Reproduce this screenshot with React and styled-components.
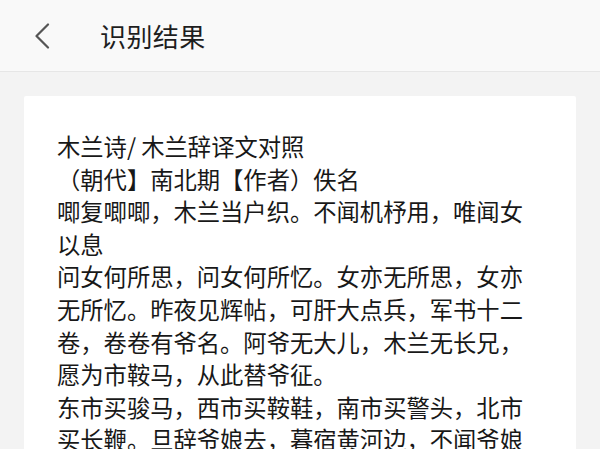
import React from "react";
import styled, { createGlobalStyle } from "styled-components";

const Global = createGlobalStyle`
  html, body { margin: 0; padding: 0; background: #f3f3f3; }
  body { font-family: "Noto Sans CJK SC", "Noto Sans", sans-serif; }
`;

const Page = styled.div`
  width: 600px;
  height: 449px;
  overflow: hidden;
  background: #f3f3f3;
  display: flex;
  flex-direction: column;
`;

const Header = styled.header`
  height: 71px;
  flex: none;
  display: flex;
  align-items: center;
  background: #f9f9f9;
  border-bottom: 1px solid #e6e6e6;
  padding-left: 32px;
  box-sizing: content-box;
`;

const BackButton = styled.button`
  border: 0;
  background: none;
  padding: 0;
  width: 20px;
  height: 28px;
  display: flex;
  align-items: center;
  justify-content: center;
  margin-top: 1px;
  cursor: pointer;
`;

const Title = styled.h1`
  margin: 0 0 0 48px;
  font-size: 26px;
  font-weight: 400;
  color: #1e1e1e;
  line-height: 1;
  letter-spacing: 0.4px;
`;

const Body = styled.main`
  flex: 1;
  padding: 24px 24px 0 24px;
  display: flex;
  flex-direction: column;
`;

const Card = styled.section`
  background: #fff;
  border-radius: 2px;
  padding: 34px 33px 20px 33px;
  flex: 1;
`;

const Line = styled.p`
  margin: 0;
  font-size: 23.3px;
  line-height: 32.6px;
  color: #181818;
  max-width: 480px;
`;

const lines = [
  "木兰诗/ 木兰辞译文对照",
  "（朝代】南北期【作者）佚名",
  "唧复唧唧，木兰当户织。不闻机杼用，唯闻女以息",
  "问女何所思，问女何所忆。女亦无所思，女亦无所忆。昨夜见辉帖，可肝大点兵，军书十二卷，卷卷有爷名。阿爷无大儿，木兰无长兄，愿为市鞍马，从此替爷征。",
  "东市买骏马，西市买鞍鞋，南市买警头，北市买长鞭。旦辞爷娘去，暮宿黄河边，不闻爷娘唤女声，但闻黄河流水鸣溅溅。",
];

export default function App() {
  return (
    <Page>
      <Global />
      <Header>
        <BackButton aria-label="返回">
          <svg width="16" height="26" viewBox="0 0 16 26" fill="none">
            <path d="M14 1.5 L2.5 13 L14 24.5" stroke="#555" strokeWidth="2.2" strokeLinecap="round" strokeLinejoin="round" />
          </svg>
        </BackButton>
        <Title>识别结果</Title>
      </Header>
      <Body>
        <Card>
          {lines.map((t, i) => (
            <Line key={i}>{t}</Line>
          ))}
        </Card>
      </Body>
    </Page>
  );
}
